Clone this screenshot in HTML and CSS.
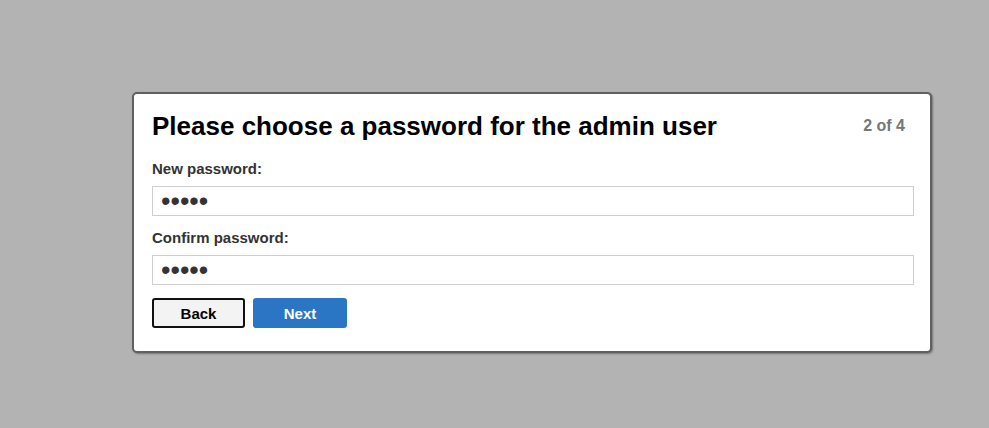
FILE: index.html
```html
<!DOCTYPE html>
<html>
<head>
<meta charset="utf-8">
<link rel="stylesheet" href="styles.css">
</head>
<body>
<div class="card">
  <div class="header">
    <h1 class="title">Please choose a password for the admin user</h1>
    <span class="step">2 of 4</span>
  </div>
  <label class="label">New password:</label>
  <input class="field" type="password" value="12345">
  <label class="label">Confirm password:</label>
  <input class="field" type="password" value="12345">
  <div class="actions">
    <button class="btn btn-back">Back</button>
    <button class="btn btn-next">Next</button>
  </div>
</div>
</body>
</html>
```
FILE: styles.css
```css
html, body {
  margin: 0;
  padding: 0;
  background: #b3b3b3;
  height: 100%;
  font-family: "Liberation Sans", Arial, sans-serif;
}
body {
  padding-top: 92px;
  padding-left: 132px;
  box-sizing: border-box;
}
.card {
  width: 800px;
  box-sizing: border-box;
  background: #fff;
  border: 2px solid #606060;
  border-radius: 5px;
  box-shadow: 1px 1px 2px rgba(0,0,0,0.35);
  padding: 14px 16px 23px 18px;
  display: flex;
  flex-direction: column;
}
.header {
  display: flex;
  align-items: center;
  justify-content: space-between;
  margin-bottom: 3px;
}
.title {
  margin: 0;
  font-size: 26px;
  font-weight: bold;
  color: #000;
  line-height: 36px;
}
.step {
  font-size: 16px;
  font-weight: bold;
  color: #777;
  margin-right: 9px;
}
.label {
  font-size: 15px;
  font-weight: bold;
  color: #333;
  margin-top: 13px;
  line-height: 18px;
}
.field {
  margin-top: 8px;
  height: 30px;
  box-sizing: border-box;
  border: 1px solid #cfcfcf;
  border-radius: 0;
  padding: 0 8px;
  font-size: 27px;
  line-height: 28px;
  color: #333;
  outline: none;
  font-family: "Liberation Sans", Arial, sans-serif;
  letter-spacing: 0;
}
.actions {
  display: flex;
  gap: 8px;
  margin-top: 13px;
}
.btn {
  width: 93px;
  height: 30px;
  box-sizing: border-box;
  border-radius: 3px;
  font-size: 15px;
  font-weight: bold;
  font-family: "Liberation Sans", Arial, sans-serif;
  cursor: pointer;
}
.btn-back {
  background: #f3f3f3;
  border: 2px solid #111;
  color: #000;
}
.btn-next {
  background: #2a76c4;
  border: none;
  color: #fff;
  width: 94px;
}
```
